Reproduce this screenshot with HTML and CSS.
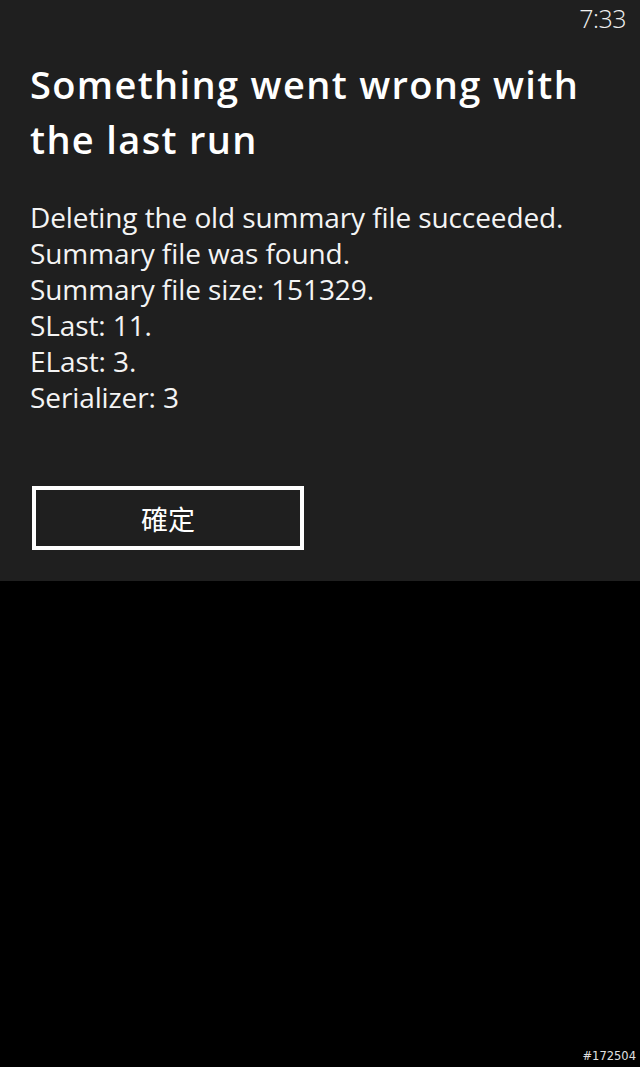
FILE: index.html
```html
<!DOCTYPE html>
<html>
<head>
<meta charset="utf-8">
<link rel="stylesheet" href="styles.css">
</head>
<body>
<div class="panel">
  <div class="status"><span class="time">7:33</span></div>
  <h1 class="title">Something went wrong with the last run</h1>
  <div class="message">
    <div>Deleting the old summary file succeeded.</div>
    <div>Summary file was found.</div>
    <div>Summary file size: 151329.</div>
    <div>SLast: 11.</div>
    <div>ELast: 3.</div>
    <div>Serializer: 3</div>
  </div>
  <div class="actions"><button class="btn">確定</button></div>
</div>
<div class="rest"><span class="mark">#172504</span></div>
</body>
</html>
```
FILE: styles.css
```css
html, body { margin: 0; padding: 0; background: #000; }
body { width: 640px; height: 1067px; display: flex; flex-direction: column; font-family: "Open Sans", "Noto Sans CJK TC", sans-serif; color: #fff; }
.panel { background: #1f1f1f; height: 581px; box-sizing: border-box; padding: 0 30px; display: flex; flex-direction: column; }
.status { display: flex; justify-content: flex-end; padding-top: 3px; height: 30px; margin-right: -16px; }
.time { font-size: 25px; font-weight: 300; line-height: 30px; color: #f0f0f0; letter-spacing: -0.5px; }
.title { margin: 24px 0 0 0; font-size: 38px; font-weight: 600; line-height: 55px; letter-spacing: 1.35px; }
.message { margin-top: 32px; font-size: 28px; line-height: 36px; font-weight: 400; color: #f4f4f4; letter-spacing: -0.1px; }
.actions { margin-top: 71px; }
.btn { width: 272px; height: 64px; margin-left: 2px; background: transparent; border: 4px solid #fff; color: #fff; font-family: "Noto Sans CJK TC", sans-serif; font-size: 27px; padding: 0; display: flex; align-items: center; justify-content: center; box-sizing: border-box; }
.rest { flex: 1; display: flex; justify-content: flex-end; align-items: flex-end; padding: 0 4px 4px 0; }
.mark { font-family: "DejaVu Sans", sans-serif; font-size: 11.5px; color: #e0e0e0; }
```
